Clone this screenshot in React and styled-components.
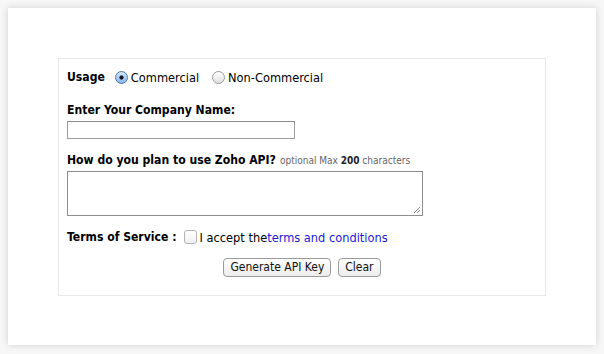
import React from "react";
import styled, { createGlobalStyle } from "styled-components";

const Global = createGlobalStyle`
  html, body { margin: 0; padding: 0; background: #ffffff; }
  body { font-family: "DejaVu Sans Condensed", "DejaVu Sans", sans-serif; color: #000; }
`;

const Page = styled.div`
  width: 604px;
  height: 354px;
  padding: 8px;
  box-sizing: border-box;
  background: #f7f7f7;
`;

const Card = styled.div`
  width: 588px;
  height: 337px;
  box-sizing: border-box;
  background: #ffffff;
  box-shadow: 0 0 7px rgba(0, 0, 0, 0.16);
  padding: 50px 0 0 50px;
`;

const Panel = styled.form`
  width: 488px;
  height: 238px;
  box-sizing: border-box;
  border: 1px solid #e8e8e8;
  padding: 10px 8px 0 8px;
  display: flex;
  flex-direction: column;
`;

const Row = styled.div`
  display: flex;
  align-items: center;
  height: ${(p) => p.h || 16}px;
  margin-top: ${(p) => p.mt || 0}px;
  font-size: 12.7px;
`;

const Label = styled.span`
  font-weight: bold;
  font-size: 12.1px;
  margin-right: ${(p) => p.mr || 0}px;
`;

const Note = styled.span`
  font-size: 10px;
  color: #666;
  margin-left: 4px;
  b { color: #222; }
`;

const Radio = styled.span`
  width: 13px;
  height: 13px;
  box-sizing: border-box;
  border-radius: 50%;
  border: 1px solid ${(p) => (p.checked ? "#4f79ad" : "#9a9a9a")};
  background: ${(p) =>
    p.checked
      ? "radial-gradient(circle at 50% 50%, #111a24 0 1.8px, transparent 2.4px), linear-gradient(#d6e8fa, #86b6e8)"
      : "linear-gradient(#ffffff, #e0e0e0)"};
  margin-right: 3px;
  margin-left: ${(p) => p.ml || 0}px;
  flex: none;
`;

const Checkbox = styled.span`
  width: 13px;
  height: 14px;
  box-sizing: border-box;
  border-radius: 3px;
  border: 1px solid #b4b4b4;
  background: linear-gradient(#ffffff, #f0f0f0);
  margin: 0 3px 0 ${(p) => p.ml || 6}px;
  flex: none;
`;

const TextInput = styled.div`
  width: 228px;
  height: 18px;
  box-sizing: border-box;
  border: 1px solid #9c9c9c;
  border-top-color: #8a8a8a;
  background: #fff;
  margin-top: ${(p) => p.mt || 0}px;
`;

const TextArea = styled.div`
  position: relative;
  width: 356px;
  height: 45px;
  box-sizing: border-box;
  border: 1px solid #8e8e8e;
  background: #fff;
  margin-top: ${(p) => p.mt || 0}px;
`;

const Grip = styled.svg`
  position: absolute;
  right: 1px;
  bottom: 1px;
`;

const Link = styled.a`
  color: #1a1ad6;
  text-decoration: none;
`;

const Buttons = styled.div`
  display: flex;
  justify-content: center;
  gap: 7px;
  margin-top: ${(p) => p.mt || 0}px;
`;

const Button = styled.button`
  height: 19px;
  padding: 0 ${(p) => p.px || 6}px;
  font-family: "DejaVu Sans Condensed", "DejaVu Sans", sans-serif;
  font-size: 12px;
  color: #111;
  background: linear-gradient(#ffffff, #ececec);
  border: 1px solid #9b9b9b;
  border-radius: 4px;
  line-height: 17px;
`;

export default function App() {
  return (
    <>
      <Global />
      <Page>
        <Card>
          <Panel>
            <Row h={16}>
              <Label mr={10}>Usage</Label>
              <Radio checked />
              <span>Commercial</span>
              <Radio ml={13} />
              <span>Non-Commercial</span>
            </Row>
            <Row h={16} mt={17}>
              <Label>Enter Your Company Name:</Label>
            </Row>
            <TextInput mt={3} />
            <Row h={16} mt={13}>
              <Label>How do you plan to use Zoho API?</Label>
              <Note>
                optional Max <b>200</b> characters
              </Note>
            </Row>
            <TextArea mt={3}>
              <Grip width="8" height="8" viewBox="0 0 8 8">
                <path d="M7 1 L1 7 M7 4 L4 7" stroke="#888" strokeWidth="1" />
              </Grip>
            </TextArea>
            <Row h={16} mt={13}>
              <Label>Terms of Service :</Label>
              <Checkbox ml={7} />
              <span>
                I accept the<Link href="#">terms and conditions</Link>
              </span>
            </Row>
            <Buttons mt={13}>
              <Button type="button">Generate API Key</Button>
              <Button type="button">Clear</Button>
            </Buttons>
          </Panel>
        </Card>
      </Page>
    </>
  );
}
